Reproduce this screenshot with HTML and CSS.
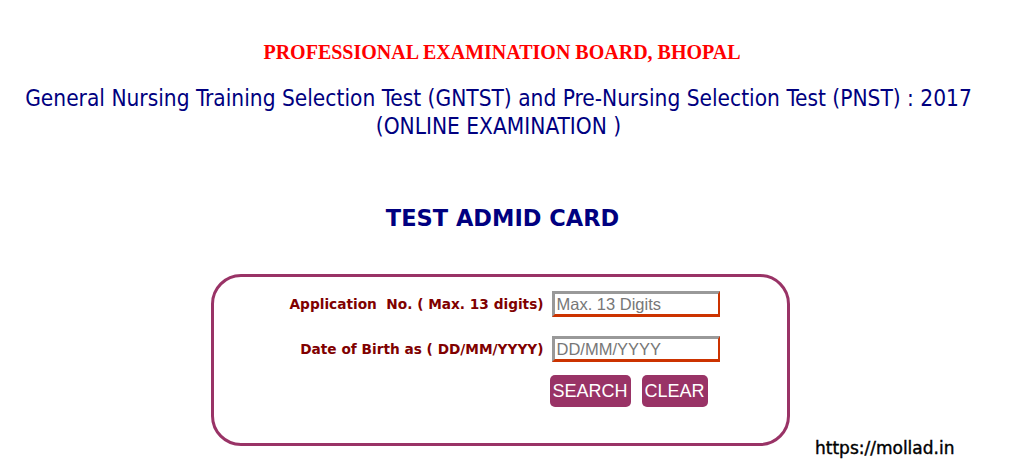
FILE: index.html
```html
<!DOCTYPE html>
<html lang="en">
<head>
    <meta charset="UTF-8">
    <title>Test Admit Card</title>
    <link rel="stylesheet" href="styles.css">
</head>
<body>
    <div class="page">
        <h1 class="board">PROFESSIONAL EXAMINATION BOARD, BHOPAL</h1>
        <h2 class="exam">General Nursing Training Selection Test (GNTST) and Pre-Nursing Selection Test (PNST) : 2017<br>(ONLINE EXAMINATION )</h2>

        <h3 class="title">TEST ADMID CARD</h3>

        <div class="box">
            <div class="form">
                <label class="lbl" for="appno">Application&nbsp; No. ( Max. 13 digits)</label>
                <input type="text" id="appno" class="field" placeholder="Max. 13 Digits">

                <label class="lbl" for="dob">Date of Birth as ( DD/MM/YYYY)</label>
                <input type="text" id="dob" class="field" placeholder="DD/MM/YYYY">

                <span></span>
                <div class="buttons">
                    <button class="btn">SEARCH</button>
                    <button class="btn">CLEAR</button>
                </div>
            </div>
        </div>
    </div>
    <div class="mark">https://mollad.in</div>
</body>
</html>
```

FILE: styles.css
```css
* {
    box-sizing: border-box;
    margin: 0;
    padding: 0;
}

body {
    background-color: #fff;
    font-family: "DejaVu Sans", Verdana, sans-serif;
    width: 1009px;
    height: 474px;
    overflow: hidden;
    position: relative;
}

.page {
    display: flex;
    flex-direction: column;
    align-items: center;
    padding-top: 41px;
}

.board {
    font-family: "Liberation Serif", "Times New Roman", serif;
    font-size: 20px;
    font-weight: bold;
    color: #ff0000;
    line-height: 23px;
    margin-left: -5px;
}

.exam {
    font-family: "DejaVu Sans Condensed", Tahoma, sans-serif;
    font-weight: normal;
    font-size: 22.5px;
    line-height: 28px;
    color: #000080;
    text-align: center;
    margin-top: 20px;
    margin-left: -12px;
}

.title {
    font-family: "DejaVu Sans", Verdana, sans-serif;
    font-size: 22.5px;
    font-weight: bold;
    color: #000080;
    margin-top: 65px;
    line-height: 26px;
    margin-left: -4px;
}

.box {
    width: 579px;
    height: 172px;
    margin-top: 43px;
    margin-left: -9px;
    border: 3px solid #993366;
    border-radius: 30px;
    padding: 14px 0 0 0;
}

.form {
    display: grid;
    grid-template-columns: 254px 168px;
    column-gap: 8px;
    row-gap: 19px;
    margin-left: 76px;
    align-items: center;
}

.lbl {
    font-size: 13.7px;
    font-weight: bold;
    color: #800000;
    text-align: right;
    white-space: nowrap;
}

.field {
    width: 168px;
    height: 26px;
    border-style: solid;
    border-width: 3px 2px 3px 3px;
    border-color: #999 #cc3300 #cc3300 #999;
    font-family: "Liberation Sans", Arial, sans-serif;
    font-size: 16.5px;
    padding: 0 2px;
    color: #333;
}

.field::placeholder {
    color: #777;
}

.buttons {
    display: flex;
    gap: 11px;
    margin-top: -6px;
    margin-left: -2px;
}

.btn {
    background-color: #993366;
    color: #fff;
    border: none;
    border-radius: 5px;
    font-family: "Liberation Sans", Arial, sans-serif;
    font-size: 18px;
    height: 32px;
    padding: 0 3px;
}

.mark {
    position: absolute;
    left: 815px;
    top: 438px;
    font-family: "DejaVu Sans", sans-serif;
    font-size: 17px;
    color: #000;
    -webkit-text-stroke: 0.4px #000;
}
```
